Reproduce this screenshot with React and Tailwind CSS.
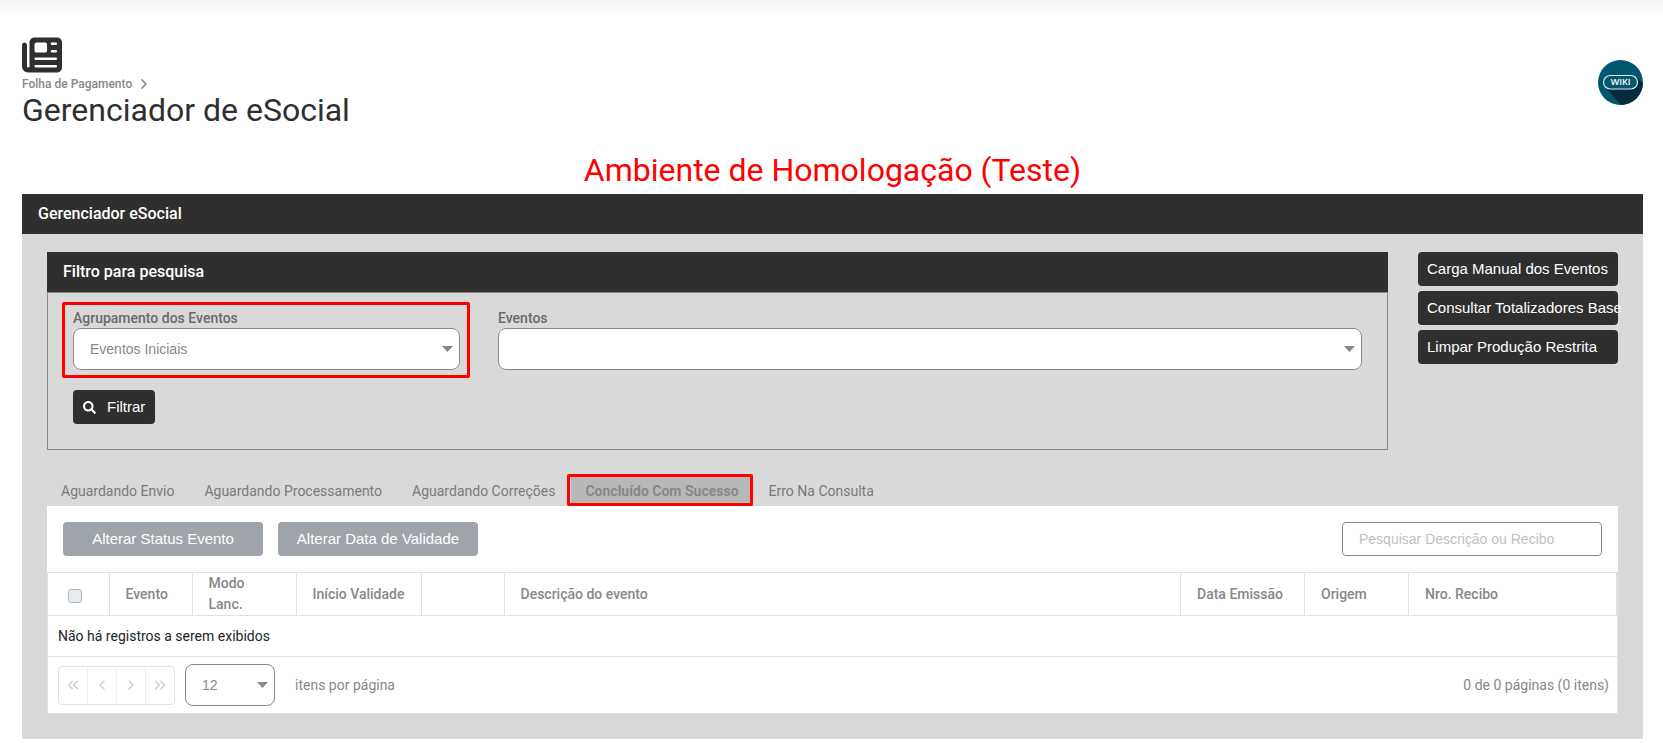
import { useState } from "react";
import { FaNewspaper } from "react-icons/fa6";
import { FaSearch } from "react-icons/fa";
import {
  ChevronLeft,
  ChevronRight,
  ChevronsLeft,
  ChevronsRight
} from "lucide-react";

const ACTIONS = [
  "Carga Manual dos Eventos",
  "Consultar Totalizadores Base",
  "Limpar Produção Restrita"
];

const TABS = [
  "Aguardando Envio",
  "Aguardando Processamento",
  "Aguardando Correções",
  "Concluído Com Sucesso",
  "Erro Na Consulta"
];

const COLUMNS = [
  { label: "Evento", width: "w-[83px]" },
  { label: "Modo Lanc.", width: "w-[104px]" },
  { label: "Início Validade", width: "w-[125px]" },
  { label: "", width: "w-[83px]" },
  { label: "Descrição do evento", width: "" },
  { label: "Data Emissão", width: "w-[124px]" },
  { label: "Origem", width: "w-[104px]" },
  { label: "Nro. Recibo", width: "w-[208px]" }
];

const PAGER = [
  { label: "Primeira página", Icon: ChevronsLeft, size: 18 },
  { label: "Página anterior", Icon: ChevronLeft, size: 16 },
  { label: "Próxima página", Icon: ChevronRight, size: 16 },
  { label: "Última página", Icon: ChevronsRight, size: 18 }
];

const WikiLogo = () => (
  <svg viewBox="0 0 45 45" className="size-[45px]" aria-hidden="true">
    <defs>
      <clipPath id="wiki-circle">
        <circle cx="22.5" cy="22.5" r="22.5" />
      </clipPath>
    </defs>
    <g clipPath="url(#wiki-circle)">
      <rect width="45" height="45" fill="#04566e" />
      <path d="M8 28 L38 17 L46 24 V46 H24 Z" fill="#032c40" />
    </g>
    <rect x="5.5" y="15.5" width="34" height="13.5" rx="6.75" fill="#04566e" stroke="#dfeaee" strokeWidth="1.2" />
    <text
      x="22.7"
      y="25.4"
      textAnchor="middle"
      fontSize="9"
      fontWeight="600"
      fill="#ffffff"
      fontFamily="'Open Sans', sans-serif"
    >
      WIKI
    </text>
  </svg>
);

const Select = ({ id, label, value, onChange, options }) => (
  <div className="relative bg-white rounded-lg">
    <select
      id={id}
      aria-label={label}
      value={value}
      onChange={e => onChange(e.target.value)}
      className="block w-full h-[42px] pl-4 pr-6 appearance-none rounded-lg border border-[#888888] font-['Liberation_Sans',Arial,sans-serif] text-sm text-[#888888]"
    >
      {options.map(option => (
        <option key={option} value={option}>{option}</option>
      ))}
    </select>
    <svg
      viewBox="0 0 11 6"
      className="absolute right-[7px] top-[18px] w-[11px] h-[6px] fill-[#888888] pointer-events-none"
      aria-hidden="true"
    >
      <path d="M0 0 H11 L5.5 6 Z" />
    </svg>
  </div>
);

const App = () => {
  const [group, setGroup] = useState("Eventos Iniciais");
  const [event, setEvent] = useState("");
  const [pageSize, setPageSize] = useState("12");
  const [activeTab, setActiveTab] = useState("Concluído Com Sucesso");

  return (
    <div className="bg-white font-[Roboto,sans-serif] text-sm text-[#888888]">
      <div className="h-4 bg-linear-to-b from-[#f3f3f3] to-white" />

      <div className="pl-[22px] pr-5 pb-1">

        {/* PAGE HEADER */}
        <header className="flex items-center justify-between pt-[19px]">
          <div>
            <FaNewspaper size={40} className="text-[#2f2f2f]" />
            <nav className="flex items-center gap-1 mt-px text-xs leading-4 font-medium">
              <a href="#folha">Folha de Pagamento</a>
              <ChevronRight size={16} strokeWidth={2.5} />
            </nav>
            <h1 className="text-[32px] leading-9 text-[#2f2f2f]">
              Gerenciador de eSocial
            </h1>
          </div>
          <a href="#wiki" aria-label="Wiki" className="mt-0.5">
            <WikiLogo />
          </a>
        </header>

        <p className="mt-[21px] pb-0.5 text-center text-[32px] leading-[43px] text-[#ff0000]">
          Ambiente de Homologação (Teste)
        </p>

        {/* MAIN PANEL */}
        <main className="bg-[#d9d9d9]">
          <h2 className="h-10 px-4 text-base leading-10 font-medium text-white bg-[#2f2f2f]">
            Gerenciador eSocial
          </h2>

          <div className="px-[25px] pt-[18px] pb-[25px]">
            <div className="flex items-start gap-[30px]">

              {/* FILTER */}
              <section className="flex-1">
                <h3 className="h-10 px-4 text-base leading-10 font-medium text-white bg-[#2f2f2f]">
                  Filtro para pesquisa
                </h3>
                <div className="px-[25px] pt-4 pb-[25px] border border-[#888888]">
                  <div className="grid grid-cols-[387fr_864fr] gap-[38px]">
                    <div className="relative">
                      <label htmlFor="grupo" className="block leading-[19px] font-medium text-[#6b6b6b]">
                        Agrupamento dos Eventos
                      </label>
                      <Select
                        id="grupo"
                        value={group}
                        onChange={setGroup}
                        options={["Eventos Iniciais"]}
                      />
                      <div className="absolute -left-[11px] -right-2.5 -top-[7px] -bottom-2 rounded-xs border-3 border-[#ff0000] pointer-events-none" />
                    </div>
                    <div>
                      <label htmlFor="eventos" className="block leading-[19px] font-medium text-[#6b6b6b]">
                        Eventos
                      </label>
                      <Select id="eventos" value={event} onChange={setEvent} options={[""]} />
                    </div>
                  </div>
                  <button
                    type="button"
                    className="flex items-center gap-[11px] h-[34px] mt-5 px-2.5 rounded-sm bg-[#2f2f2f] text-white text-[15px] font-['Liberation_Sans',Arial,sans-serif]"
                  >
                    <FaSearch size={13} />
                    Filtrar
                  </button>
                </div>
              </section>

              {/* SIDE ACTIONS */}
              <div className="flex flex-col gap-[5px] w-[200px]">
                {ACTIONS.map(action => (
                  <button
                    key={action}
                    type="button"
                    className="h-[34px] px-[9px] rounded-sm bg-[#2f2f2f] text-left text-white text-[15px] whitespace-nowrap font-['Liberation_Sans',Arial,sans-serif]"
                  >
                    {action}
                  </button>
                ))}
              </div>
            </div>

            {/* TABS */}
            <div role="tablist" className="flex mt-6">
              {TABS.map(tab => (
                <button
                  key={tab}
                  type="button"
                  role="tab"
                  aria-selected={tab === activeTab}
                  onClick={() => setActiveTab(tab)}
                  className={`relative h-8 px-3.5 pt-0.5 mr-0.5 ${
                    tab === activeTab ? "bg-[#b8b8b8] font-bold" : "text-[#7a7a7a]"
                  }`}
                >
                  {tab}
                  {tab === activeTab && (
                    <span className="absolute inset-y-0 -left-1 right-0 rounded-xs border-3 border-[#ff0000]" />
                  )}
                </button>
              ))}
            </div>

            {/* EVENTS GRID */}
            <section className="bg-white">
              <div className="flex gap-[15px] p-4">
                <button
                  type="button"
                  className="w-[200px] h-[34px] rounded-sm bg-[#9fa4aa] text-white text-[15px] font-['Liberation_Sans',Arial,sans-serif]"
                >
                  Alterar Status Evento
                </button>
                <button
                  type="button"
                  className="w-[200px] h-[34px] rounded-sm bg-[#9fa4aa] text-white text-[15px] font-['Liberation_Sans',Arial,sans-serif]"
                >
                  Alterar Data de Validade
                </button>
                <input
                  type="text"
                  aria-label="Pesquisar"
                  placeholder="Pesquisar Descrição ou Recibo"
                  className="ml-auto w-[260px] h-[34px] px-4 rounded-sm border border-[#888888] text-sm placeholder:text-[#bfbfbf] font-['Liberation_Sans',Arial,sans-serif]"
                />
              </div>

              <div className="border border-[#dee2e6]">
                <table className="w-full table-fixed">
                  <thead>
                    <tr className="h-[42px] border-b border-[#dee2e6]">
                      <th className="w-[61px] pl-5 pt-1 pb-0 text-left">
                        <input
                          type="checkbox"
                          aria-label="Selecionar todos"
                          className="block size-3.5 appearance-none rounded-[3px] border border-[#adb5bd] bg-[#e9ecef]"
                        />
                      </th>
                      {COLUMNS.map((column, index) => (
                        <th
                          key={index}
                          className={`${column.width} px-4 py-0 border-x border-[#dee2e6] text-left leading-[21px] font-medium`}
                        >
                          {column.label}
                        </th>
                      ))}
                    </tr>
                  </thead>
                  <tbody>
                    <tr className="h-[41px] border-b border-[#dee2e6]">
                      <td colSpan={9} className="px-2.5 py-0 text-[#212529]">
                        Não há registros a serem exibidos
                      </td>
                    </tr>
                  </tbody>
                </table>

                {/* PAGINATION */}
                <div className="flex items-center pl-2.5 pr-2 py-[7px]">
                  <div className="flex w-[117px] h-[39px] rounded-sm border border-[#dee2e6] divide-x divide-[#f0f0f0] text-[#cfcfcf]">
                    {PAGER.map(({ label, Icon, size }) => (
                      <button
                        key={label}
                        type="button"
                        aria-label={label}
                        disabled
                        className="flex flex-1 items-center justify-center"
                      >
                        <Icon size={size} />
                      </button>
                    ))}
                  </div>
                  <div className="w-[90px] ml-2.5">
                    <Select
                      id="itens"
                      label="Itens por página"
                      value={pageSize}
                      onChange={setPageSize}
                      options={["12", "24", "48"]}
                    />
                  </div>
                  <span className="ml-5">itens por página</span>
                  <span className="ml-auto">0 de 0 páginas (0 itens)</span>
                </div>
              </div>
            </section>
          </div>
        </main>
      </div>
    </div>
  );
};

export default App;
